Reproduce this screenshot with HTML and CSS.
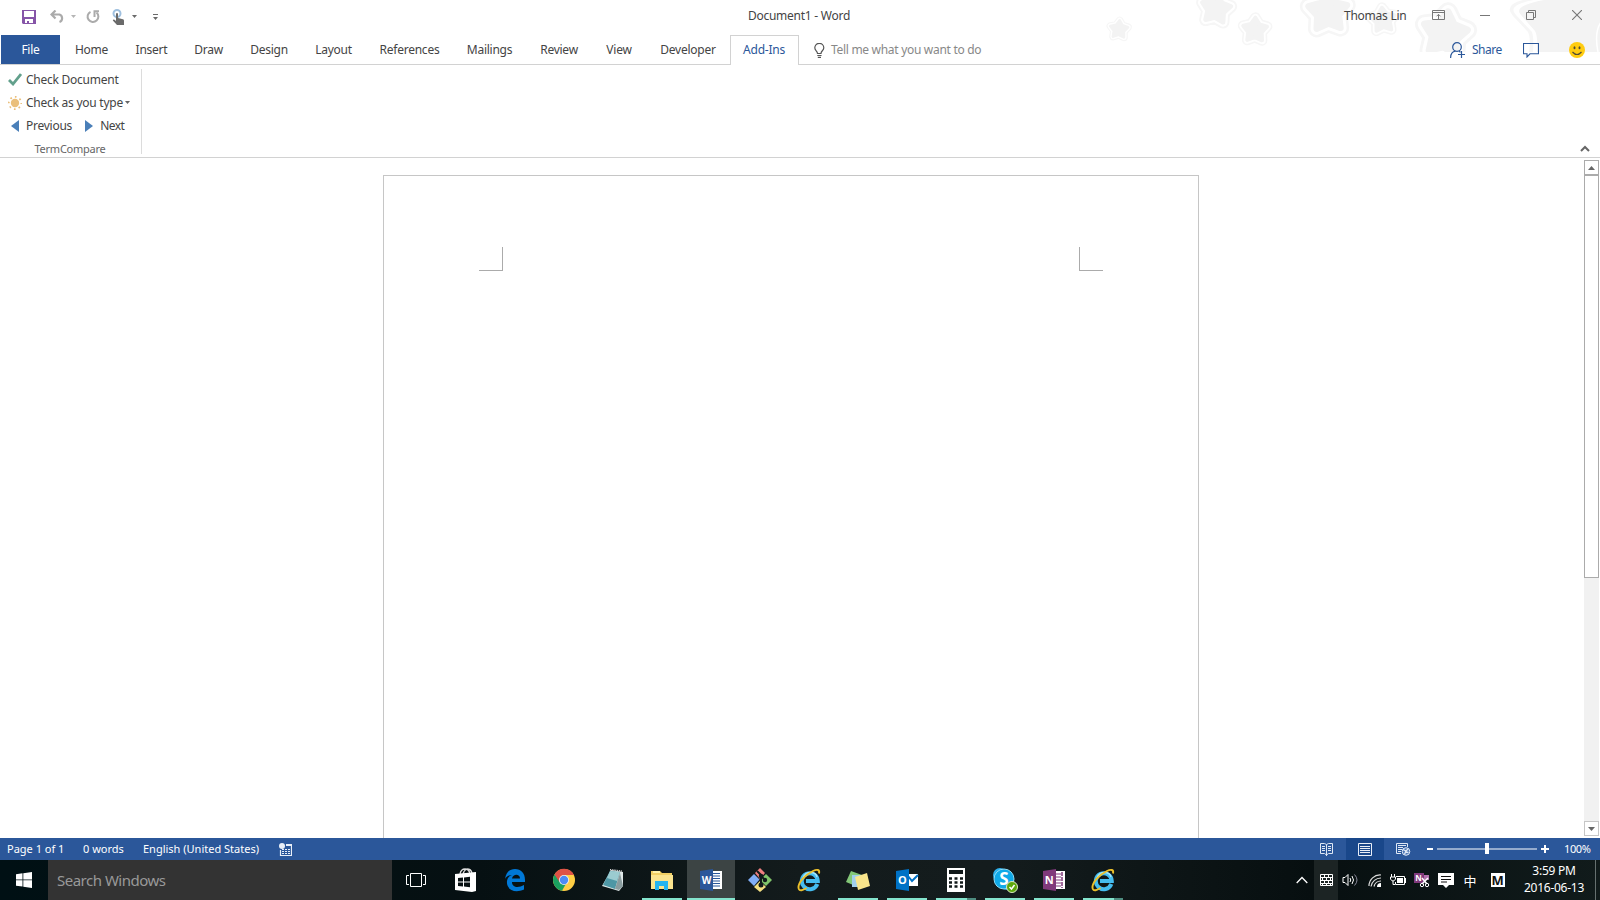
FILE: index.html
```html
<!DOCTYPE html>
<html lang="en">
<head>
<meta charset="utf-8">
<title>Document1 - Word</title>
<link rel="stylesheet" href="styles.css">
</head>
<body>
<div class="window">
  <svg class="stars" width="520" height="52" viewBox="1080 0 520 52">
    <defs>
      <path id="star" d="M0-9.500 3.300-4.500 9.200-3 5.200 1.700 5.700 7.800 0 5.500-5.700 7.800-5.200 1.700-9.200-3-3.300-4.500Z" stroke-linejoin="round"/>
      <g id="deco"><use href="#star" stroke="#f6f6f6" stroke-width="8.200"/><use href="#star" stroke="#fff" stroke-width="5.800"/><use href="#star" fill="#f3f3f3" stroke="#f3f3f3" stroke-width="3"/></g>
    </defs>
    <use href="#deco" transform="translate(1119 29.500) rotate(4) scale(.95)"/>
    <use href="#deco" transform="translate(1216 9) rotate(8) scale(1.55)"/>
    <use href="#deco" transform="translate(1255 30) rotate(2) scale(1.3)"/>
    <use href="#deco" transform="translate(1328 12) rotate(-2) scale(2.1)"/>
    <use href="#deco" transform="translate(1383 20) rotate(-5) scale(1.3)"/>
    <use href="#deco" transform="translate(1445 34) rotate(8) scale(2.35)"/>
    <path d="M1600 0H1523Q1503 5 1513 16L1528 32Q1531 38 1529 52H1600z" fill="#f6f6f6"/>
    <path d="M1600 0H1534Q1506 5 1516 15L1532 32Q1534 38 1533 52H1600z" fill="#fff"/>
    <path d="M1600 0H1544Q1512 6 1521 15L1535 31Q1538 36 1537 52H1600z" fill="#f3f3f3"/>
    <path d="M1601 22Q1594 32 1598 52" fill="none" stroke="#fff" stroke-width="1.500"/>
  </svg>

  <header class="titlebar">
    <div class="quick">
      <svg width="14" height="14" viewBox="0 0 14 14"><path fill="#8655a8" fill-rule="evenodd" d="M0 0h14v14H1l-1-1zM2 1v6h10V1zM3 9v4h2v-2h2v2h4V9z"/></svg>
      <svg width="15" height="13" viewBox="0 0 15 13"><path d="M1 4.500h8.500a4 4 0 0 1 0 7.500M5.500.500 1.500 4.500l4 4" fill="none" stroke="#ababab" stroke-width="2.200"/></svg>
      <svg width="5" height="3" viewBox="0 0 5 3"><path d="M0 0h5L2.500 3z" fill="#b5b5b5"/></svg>
      <svg width="14" height="14" viewBox="0 0 14 14"><path d="M4.500 1.800A5.400 5.400 0 1 0 10.500 2.500" fill="none" stroke="#ababab" stroke-width="2"/><path d="M8.500 7V1.200H13" fill="none" stroke="#ababab" stroke-width="2"/></svg>
      <svg width="13" height="16" viewBox="0 0 13 16"><circle cx="5" cy="4.500" r="3.500" fill="none" stroke="#9fc0df" stroke-width="2"/><path d="M4 4.500q1-1 2 0V9l5 1.200q1 .4 1 1.500V16H5L.8 11.500q.4-1.500 1.700-.8L4 12z" fill="#6a6a6a"/></svg>
      <svg width="5" height="3" viewBox="0 0 5 3"><path d="M0 0h5L2.500 3z" fill="#6a6a6a"/></svg>
      <svg width="6" height="6" viewBox="0 0 6 6"><path d="M0 0h5v1H0zM0 3h5L2.500 6z" fill="#6a6a6a"/></svg>
    </div>
    <div class="title">Document1 - Word</div>
    <div class="user">Thomas Lin</div>
    <div class="controls">
      <svg width="13" height="10" viewBox="0 0 13 10" fill="none" stroke="#777"><path d="M.5.5h12v9H.500zM.5 2.500h12M6.500 9V4.500M4.500 6.300l2-2 2 2"/></svg>
      <svg width="10" height="10" viewBox="0 0 10 10"><path d="M0 5.500h10" stroke="#777"/></svg>
      <svg width="10" height="10" viewBox="0 0 10 10" fill="none" stroke="#777"><path d="M.5 2.500h7v7h-7zM2.500 2.500v-2h7v7h-2"/></svg>
      <svg width="10" height="10" viewBox="0 0 10 10"><path d="m0 0 10 10M10 0 0 10" stroke="#777" stroke-width="1.100"/></svg>
    </div>
  </header>

  <nav class="tabs">
    <span class="file">File</span><span>Home</span><span>Insert</span><span>Draw</span><span>Design</span><span>Layout</span><span>References</span><span>Mailings</span><span>Review</span><span>View</span><span>Developer</span><span class="active">Add-Ins</span>
    <div class="tell">
      <svg width="11" height="15" viewBox="0 0 11 15" fill="none" stroke="#555" stroke-width="1.200"><path d="M3.500 10.500C3.500 8 .8 7.500.8 4.800a4.500 4.500 0 0 1 9 0C9.800 7.500 7 8 7 10.500zM3.300 12.500h4.200M3.800 14.300h3.200"/></svg>
      <span>Tell me what you want to do</span>
    </div>
    <div class="share">
      <svg width="15" height="16" viewBox="0 0 15 16" fill="none" stroke="#2b579a" stroke-width="1.200"><circle cx="7" cy="5" r="4.300"/><path d="M.6 16c0-4 2-6.500 5-6.800M9 9.200l1.500 1M11.500 9v7M8 12.500h7"/></svg>
      <span>Share</span>
      <svg width="16" height="15" viewBox="0 0 16 15" fill="none" stroke="#2b579a" stroke-width="1.100"><path d="M.5.500h15v10.300H7L4 14v-3.200H.500z"/></svg>
      <svg width="16" height="16" viewBox="0 0 16 16"><circle cx="8" cy="8" r="8" fill="#fc1"/><ellipse cx="5.500" cy="5.700" rx="1" ry="1.500" fill="#514b35"/><ellipse cx="10.500" cy="5.700" rx="1" ry="1.500" fill="#514b35"/><path d="M3.500 10q4.500 5 9 0" fill="none" stroke="#514b35" stroke-width="1.200"/></svg>
    </div>
  </nav>

  <section class="ribbon">
    <div class="group">
      <div class="cmd"><svg width="14" height="13" viewBox="0 0 14 13"><path d="m1 7 4 4L13 1" fill="none" stroke="#62a08c" stroke-width="2.800"/></svg><span>Check Document</span></div>
      <div class="cmd"><svg width="14" height="14" viewBox="0 0 14 14"><circle cx="7" cy="7" r="4.200" fill="#eabf7b"/><circle cx="7" cy="7" r="6.200" fill="none" stroke="#eabf7b" stroke-width="1.700" stroke-dasharray="1.700 3.170" stroke-dashoffset=".85"/></svg><span>Check as you type</span><svg class="drop" width="5" height="3" viewBox="0 0 5 3"><path d="M0 0h5L2.500 3z" fill="#666"/></svg></div>
      <div class="cmd"><svg width="14" height="12" viewBox="0 0 14 12"><path d="M11 0v12L3 6z" fill="#4a7fb8"/></svg><span>Previous</span><svg class="next" width="8" height="12" viewBox="0 0 8 12"><path d="M0 0v12l8-6z" fill="#4a7fb8"/></svg><span>Next</span></div>
      <div class="caption">TermCompare</div>
    </div>
    <svg class="collapse" width="10" height="7" viewBox="0 0 10 7"><path d="M1 6l4-4 4 4" fill="none" stroke="#666" stroke-width="2"/></svg>
  </section>

  <main class="workspace">
    <div class="page"><i class="corner left"></i><i class="corner right"></i></div>
    <div class="scroll">
      <div class="btn"><svg width="7" height="4" viewBox="0 0 7 4"><path d="M0 4h7L3.500 0z" fill="#666"/></svg></div>
      <div class="thumb"></div>
      <div class="btn down"><svg width="7" height="4" viewBox="0 0 7 4"><path d="M0 0h7L3.500 4z" fill="#666"/></svg></div>
    </div>
  </main>

  <footer class="status">
    <span>Page 1 of 1</span><span>0 words</span><span>English (United States)</span>
    <svg width="13" height="13" viewBox="0 0 13 13"><circle cx="3" cy="3" r="3" fill="#e8eef7"/><path d="M7 1.500h5.500v11h-11V7M7 2.500h6" fill="none" stroke="#e8eef7" stroke-width="1.200"/><path d="M3 6.500h8M3 8.500h8M3 10.500h8" stroke="#e8eef7" stroke-dasharray="2 1"/></svg>
    <div class="views">
      <div><svg width="13" height="13" viewBox="0 0 13 13" fill="none" stroke="#dfe8f5"><path d="M6.500 1.500V13M.5.500h4l2 1 2-1h4v10h-4l-2 1.500-2-1.500h-4zM2 3.500h3M2 5.500h3M2 7.500h3M8 3.500h3M8 5.500h3M8 7.500h3"/></svg></div>
      <div class="on"><svg width="14" height="13" viewBox="0 0 14 13" fill="none" stroke="#e8eef7"><path d="M.5.500h13v12H.500zM2 3.500h10M2 5.500h10M2 7.500h10M2 9.500h10"/></svg></div>
      <div><svg width="15" height="13" viewBox="0 0 15 13" fill="none" stroke="#dfe8f5"><path d="M5 10.500H.500V.500h11V4M2 2.500h8M2 4.500h5M2 6.500h4M2 8.500h3"/><circle cx="10" cy="8.500" r="3.800" fill="#4f78b6"/><path d="M7 6.500l3 1.500 2-2M8.500 11.500l1-2.500 3 .5" stroke-width="1.300"/></svg></div>
    </div>
    <svg class="zoombar" width="122" height="12" viewBox="0 0 122 12"><path d="M0 5h6v2H0zM10 5.500h100v1H10zM58 0h4v11h-4zM114 5h8v2h-8zM117 2h2v8h-2z" fill="#fff"/></svg>
    <span>100%</span>
  </footer>

  <div class="taskbar">
    <div class="start"><svg width="16" height="16" viewBox="0 0 16 16"><path fill="#fff" d="M0 2.200 6.500 1.300v6.200H0zM7.300 1.200 16 0v7.500H7.300zM0 8.300h6.500v6.300L0 13.700zM7.300 8.300H16V16l-8.700-1.200z"/></svg></div>
    <div class="search">Search Windows</div>
    <div class="apps">
      <div class="view"><svg width="24" height="24" viewBox="0 0 24 24" fill="none" stroke="#fff"><path d="M6.500 5.500h11v13h-11zM5 7.500H2.500v9H5M19 7.500h2.500v9H19"/></svg></div>
      <div><svg width="24" height="24" viewBox="0 0 24 24"><path d="M6 6q1-5 5-5t5 5M9 6q1-4 4-5 4 0 5 4" fill="none" stroke="#ddd" stroke-width="1.300"/><path fill="#fff" d="M1 6l21-2v19l-4 1-17-2z"/><path d="M4 10l5-.5v4H4zM10 9.400l6-.6v4.700h-6zM4 14.500h5v4l-5-.5zM10 14.500h6v4.700l-6-.6z" fill="#071012"/></svg></div>
      <div><svg width="24" height="24" viewBox="0 0 24 24"><path fill="#0078d7" d="M2 11C3 4 7 1 12 1c6 0 10 4 10 11v2H9c0 6 7 6 12 3v4.500C11 26 3 21 4 13c.5-3 2-5 5-6-4 0-6 2-7 4zm7-.5h8c0-5-7-5-8 0z"/></svg></div>
      <div><svg width="24" height="24" viewBox="0 0 24 24"><circle cx="12" cy="12" r="11" fill="#ffce44"/><path d="M12 12 2.500 6.500A11 11 0 0 0 10 22.800L15 14z" fill="#1aa15f"/><path d="M2.500 6.500A11 11 0 0 1 22 7H12L7.500 14z" fill="#de5246"/><circle cx="12" cy="12" r="5" fill="#f1f1f1"/><circle cx="12" cy="12" r="4.200" fill="#4c8bf5"/></svg></div>
      <div><svg width="24" height="24" viewBox="0 0 24 24"><path d="M10 2l12 2v14l-4 5-17-5z" fill="#dfe8e8"/><path d="M9 3l10 1-5 17L2 17z" fill="#4e97a5"/><path d="M9 3l10 1-3 9-10-3z" fill="#9bcbd0"/><path d="M9 1.700l12 1.500" stroke="#ddd" stroke-width="1.600" stroke-dasharray="1 .8"/><path d="M19 5l3 13-4 4-4-1z" fill="#8a9c9e"/></svg></div>
      <div class="run"><svg width="24" height="24" viewBox="0 0 24 24"><path d="M1 3h9l2 2h10v16H1z" fill="#f1cf64"/><path d="M1 7h22v14H1z" fill="#fbe48f"/><path d="M3 3h7v2H3z" fill="#fff1a8"/><path d="M5 13h13v9h-4v-4H9v4H5z" fill="#26b4ef"/></svg></div>
      <div class="run current"><svg width="24" height="24" viewBox="0 0 24 24"><path d="M12 3h11v18H12z" fill="#fff"/><path d="M14 5.500h7M14 8h7M14 10.500h7M14 13h7M14 15.500h7M14 18h7" stroke="#2b579a" stroke-width="1.200"/><path d="M1 3l13-2v22L1 21z" fill="#2b579a"/><text x="7.500" y="16" text-anchor="middle" class="logo small">W</text></svg></div>
      <div><svg width="26" height="26" viewBox="0 0 26 26"><path d="M13 1l5 5-5 6-5-6z" fill="#f08080"/><path d="M7 7l5.500 5.500L7 19l-6-6z" fill="#80aef7"/><path d="M19 7l6 6-6 6-6-6z" fill="#80c56b"/><path d="M13 14l6 6-6 5-6-5z" fill="#f4df80"/><path d="M10 4l4 4v11M14 9l4 4" fill="none" stroke="#111a1b" stroke-width="2"/><g fill="#111a1b"><circle cx="14" cy="9" r="2.300"/><circle cx="18" cy="13" r="2.200"/><circle cx="14" cy="18" r="2.500"/></g></svg></div>
      <div><svg width="24" height="24" viewBox="0 0 24 24"><use href="#ie"/></svg></div>
      <div class="run"><svg width="26" height="24" viewBox="0 0 26 24"><path d="M6 3l11 4-4 12L1 14z" fill="#83c878"/><path d="M7 7h12v12H7z" fill="#a1d0ec"/><path d="M10 9l12-4 3 13-12 4z" fill="#f8e58b"/></svg></div>
      <div class="run"><svg width="24" height="24" viewBox="0 0 24 24"><path d="M12 6h11v12H12z" fill="#fff"/><path d="M13 8l4 5 6-6" fill="none" stroke="#0072c6" stroke-width="2"/><path d="M1 3l13-2v22L1 21z" fill="#0072c6"/><text x="7.300" y="16" text-anchor="middle" class="logo">O</text></svg></div>
      <div class="run multi"><svg width="24" height="26" viewBox="0 0 24 26"><path d="M3 1h18v24H3z" fill="#fff"/><path d="M5 3h14v4H5z" fill="#101819"/><path d="M5 11.500h15M5 15.500h15M5 19.500h15" stroke="#101819" stroke-width="2.500" stroke-dasharray="3 2.500"/></svg></div>
      <div class="run"><svg width="26" height="26" viewBox="0 0 26 26"><circle cx="8" cy="8" r="7" fill="#2bb0ec"/><circle cx="15.500" cy="16" r="7" fill="#2bb0ec"/><circle cx="12" cy="12" r="10" fill="#10a9e8" stroke="#8edcf7"/><text x="12" y="18" text-anchor="middle" class="logo big">S</text><circle cx="20" cy="20" r="5.500" fill="#5da70c" stroke="#d8e8c2"/><path d="M17.500 20l2 2 3-4" fill="none" stroke="#fff" stroke-width="1.500"/></svg></div>
      <div class="run"><svg width="24" height="24" viewBox="0 0 24 24"><path d="M12 3h11v18H12z" fill="#fff"/><path d="M20 4v16" stroke="#80397b" stroke-width="1.500" stroke-dasharray="4 1"/><path d="M14 6h5M14 9h5M14 12h5M14 15h5M14 18h5" stroke="#80397b"/><path d="M1 3l13-2v22L1 21z" fill="#80397b"/><text x="7.300" y="16" text-anchor="middle" class="logo">N</text></svg></div>
      <div class="run multi"><svg width="24" height="24" viewBox="0 0 24 24"><g id="ie"><path d="M20.300 16A8 8 0 1 1 20.800 13H9" fill="none" stroke="#45bdf0" stroke-width="4"/><path d="M6 10Q8 4.500 13.500 4.500T20 9" fill="none" stroke="#a4e6fb" stroke-width="1.500"/><path d="M22 5.500c1-4-2-4.500-6-2.500C8 7 1 14.500 1.500 20c.5 4 5 2 8 0" fill="none" stroke="#ecc02b" stroke-width="1.900"/></g></svg></div>
    </div>
    <div class="tray">
      <div><svg width="12" height="8" viewBox="0 0 12 8"><path d="M.7 7 6 1.500 11.300 7" fill="none" stroke="#fff" stroke-width="1.300"/></svg></div>
      <div class="lit"><svg width="13" height="12" viewBox="0 0 13 12" fill="none" stroke="#fff"><path d="M.5.500h12v11H.500zM0 3.500h13M0 6.500h13M0 9.500h13M4.500 0v3M8.500 0v3M2.500 3v3M6.500 3v3M10.500 3v3M4.500 6v3M8.500 6v3M2.500 9v3M6.500 9v3M10.500 9v3"/></svg></div>
      <div><svg width="17" height="14" viewBox="0 0 17 14" fill="none" stroke="#fff"><path d="M1 4.500h2l3-3v11l-3-3H1zM8 5q1.500 2 0 4M10 3q3 4 0 8"/><path d="M12.500 1.500q5 5.500 0 11" stroke="#889"/></svg></div>
      <div><svg width="13" height="13" viewBox="0 0 13 13" fill="none" stroke="#ddd" stroke-width="1.200"><path d="M1 12A11 11 0 0 1 13 1M3 12.500A10 10 0 0 1 13 4M6 12.500A7 7 0 0 1 13 7"/><path d="M9 13a4 4 0 0 1 4-4v4z" fill="#fff" stroke="none"/></svg></div>
      <div><svg width="16" height="12" viewBox="0 0 16 12" fill="none" stroke="#fff"><path d="M6 2.500h8.500v8h-9V8M15.500 4v5M1.500 0v3M4.500 0v3M.5 3h5v2q-1 2-2.500 2T.5 5zM3 7v3.500h2"/><path d="M7 4h6v5H7z" fill="#fff" stroke="none"/></svg></div>
      <div><svg width="16" height="15" viewBox="0 0 16 15"><path d="M0 0h10v10H0z" fill="#80397b"/><path d="M10 2h5v5h-5z" fill="#b273ad"/><text x="4.500" y="8" text-anchor="middle" class="logo tiny">N</text><path d="M8 5l5 6M14 5l-6 6" stroke="#fff" stroke-width="1.500"/><circle cx="8" cy="12" r="1.700" fill="none" stroke="#fff"/><circle cx="13" cy="12" r="1.700" fill="none" stroke="#fff"/></svg></div>
      <div><svg width="16" height="15" viewBox="0 0 16 15"><path d="M0 0h16v12h-5l-3 3-3-3H0z" fill="#fff"/><path d="M3 3.500h10M3 6.500h10M3 9h6" stroke="#111"/></svg></div>
      <div class="ime">中</div>
      <div><span class="m">M</span></div>
    </div>
    <div class="clock"><span>3:59 PM</span><span>2016-06-13</span></div>
  </div>
</div>
</body>
</html>
```
FILE: styles.css
```css
* { box-sizing: border-box; }
body { margin: 0; font: 12px/16px "Noto Sans", "Open Sans", sans-serif; color: #444; letter-spacing: -0.25px; }
svg { display: block; flex: none; }
.window { position: relative; width: 1600px; height: 900px; overflow: hidden; background: #fff; display: flex; flex-direction: column; white-space: nowrap; }
.stars { position: absolute; right: 0; top: 0; }

/* Title bar */
.titlebar { position: relative; height: 35px; display: grid; grid-template-columns: 700px 198px 446px 88px 168px; align-items: center; padding-bottom: 3px; }
.quick { display: grid; grid-template-columns: 28px 21px 15px 26px 20px 21px 6px; align-items: center; padding: 1px 0 0 22px; }
.title { text-align: center; }
.user { grid-column: 4; }
.controls { grid-column: 5; display: grid; grid-template-columns: 48px 46px 46px 10px; align-items: center; padding-bottom: 2px; }

/* Ribbon tabs */
.tabs { position: relative; height: 30px; display: grid; grid-template-columns: 59px 63px 57px 57px 64px 65px 87px 73px 66px 54px 84px 69px 1fr 150px; padding-left: 1px; align-items: stretch; }
.tabs::after { content: ""; position: absolute; left: 0; right: 0; bottom: 0; height: 1px; background: #d2d2d2; }
.tabs > span { display: flex; align-items: center; justify-content: center; }
.tabs .file { background: #2b579a; color: #fff; margin-bottom: 1px; }
.tabs .active { position: relative; z-index: 1; background: #fff; border: 1px solid #d2d2d2; border-bottom: 0; padding: 0 1px 1px 0; color: #2b579a; }
.tell { display: flex; align-items: center; gap: 6px; padding-left: 15px; color: #888; letter-spacing: -0.3px; }
.share { display: grid; grid-template-columns: 22px 51px 46px 16px; align-items: center; color: #2b579a; letter-spacing: -0.5px; }

/* Ribbon body */
.ribbon { position: relative; height: 93px; border-bottom: 1px solid #d2d2d2; display: flex; justify-content: space-between; padding: 4px 10px 3px 0; }
.group { width: 142px; border-right: 1px solid #dcdcdc; padding: 0 0 0 8px; }
.cmd { position: relative; top: -1px; height: 23px; display: flex; align-items: center; }
.cmd > svg:first-child { margin-right: 4px; }
.cmd .drop { margin-left: 2px; }
.cmd .next { margin: 0 7px 0 13px; }
.cmd .next + span { letter-spacing: -0.5px; }
.caption { font-size: 11px; color: #666; text-align: center; padding: 3px 9px 0 0; letter-spacing: -0.25px; }
.collapse { align-self: flex-end; margin-bottom: 2px; }

/* Document area */
.workspace { height: 680px; display: grid; grid-template-columns: 383px 816px 385px 15px; overflow: hidden; }
.page { grid-column: 2; margin-top: 17px; border: 1px solid #c6c6c6; border-bottom: 0; padding: 71px 95px 0; display: flex; justify-content: space-between; }
.corner { width: 24px; height: 24px; border: solid #ababab; border-width: 0 1px 1px 0; }
.corner.right { border-width: 0 0 1px 1px; }
.scroll { grid-column: 4; margin: 2px 0; background: #f1f1f1; display: flex; flex-direction: column; }
.btn { height: 15px; border: 1px solid #ababab; background: #fff; display: flex; align-items: center; justify-content: center; }
.thumb { height: 403px; border: 1px solid #ababab; background: #fff; }
.down { margin-top: auto; border-color: #c6c6c6; }

/* Status bar */
.status { height: 22px; background: #2b579a; color: #fff; font-size: 11px; display: grid; grid-template-columns: 76px 60px 136px 1029px 119px 137px 36px; align-items: center; padding-left: 7px; letter-spacing: 0; }
.status > span:last-child { letter-spacing: -0.4px; }
.views { display: grid; grid-template-columns: 38px 38px 43px; align-self: stretch; }
.views > div { display: flex; align-items: center; padding-left: 12px; }
.views .on { background: #19478a; }

/* Taskbar */
.taskbar { height: 40px; display: grid; grid-template-columns: 48px 344px 898px 223px 83px 4px; grid-template-rows: 40px; background: linear-gradient(90deg, #001014 0, #061012 30%, #131b1c 50%, #141c1d 62%, #070f10 82%, #111b1b 100%); color: #fff; }
.start { display: flex; align-items: center; justify-content: center; }
.search { background: #333; color: #999; font-size: 15px; line-height: 40px; padding-left: 9px; letter-spacing: -0.5px; }
.apps { display: grid; grid-template-columns: repeat(15, 49px); }
.apps > div { position: relative; display: flex; align-items: center; justify-content: center; }
.apps .view { padding-right: 2px; }
.apps .run::after { content: ""; position: absolute; left: 5px; width: 40px; bottom: 0; height: 2px; background: #84e4cd; }
.apps .multi::after { background: linear-gradient(90deg, #84e4cd 31px, #4e8d80 31px); }
.apps .current { background: #3c4444; width: 48px; margin-left: 1px; }
.apps .current::after { left: 0; width: 48px; }
.logo { fill: #fff; font: bold 11px "Open Sans", sans-serif; letter-spacing: 0; }
.logo.small { font-size: 10px; }
.logo.big { font-size: 17px; }
.logo.tiny { font-size: 8px; }
.tray { display: grid; grid-template-columns: 24px 24px 24px 24px 23px 25px 24px 24px 31px; }
.tray > div { display: flex; align-items: center; justify-content: center; }
.tray .lit { background: #1c2424; }
.ime { font: 13px "Noto Sans CJK SC", sans-serif; }
.m { width: 14px; height: 14px; background: #fff; color: #111; font: bold 13px/14px "Open Sans", sans-serif; text-align: center; }
.clock { display: flex; flex-direction: column; align-items: center; line-height: 17px; padding-top: 2px; border-right: 1px solid #66706f; }
```
